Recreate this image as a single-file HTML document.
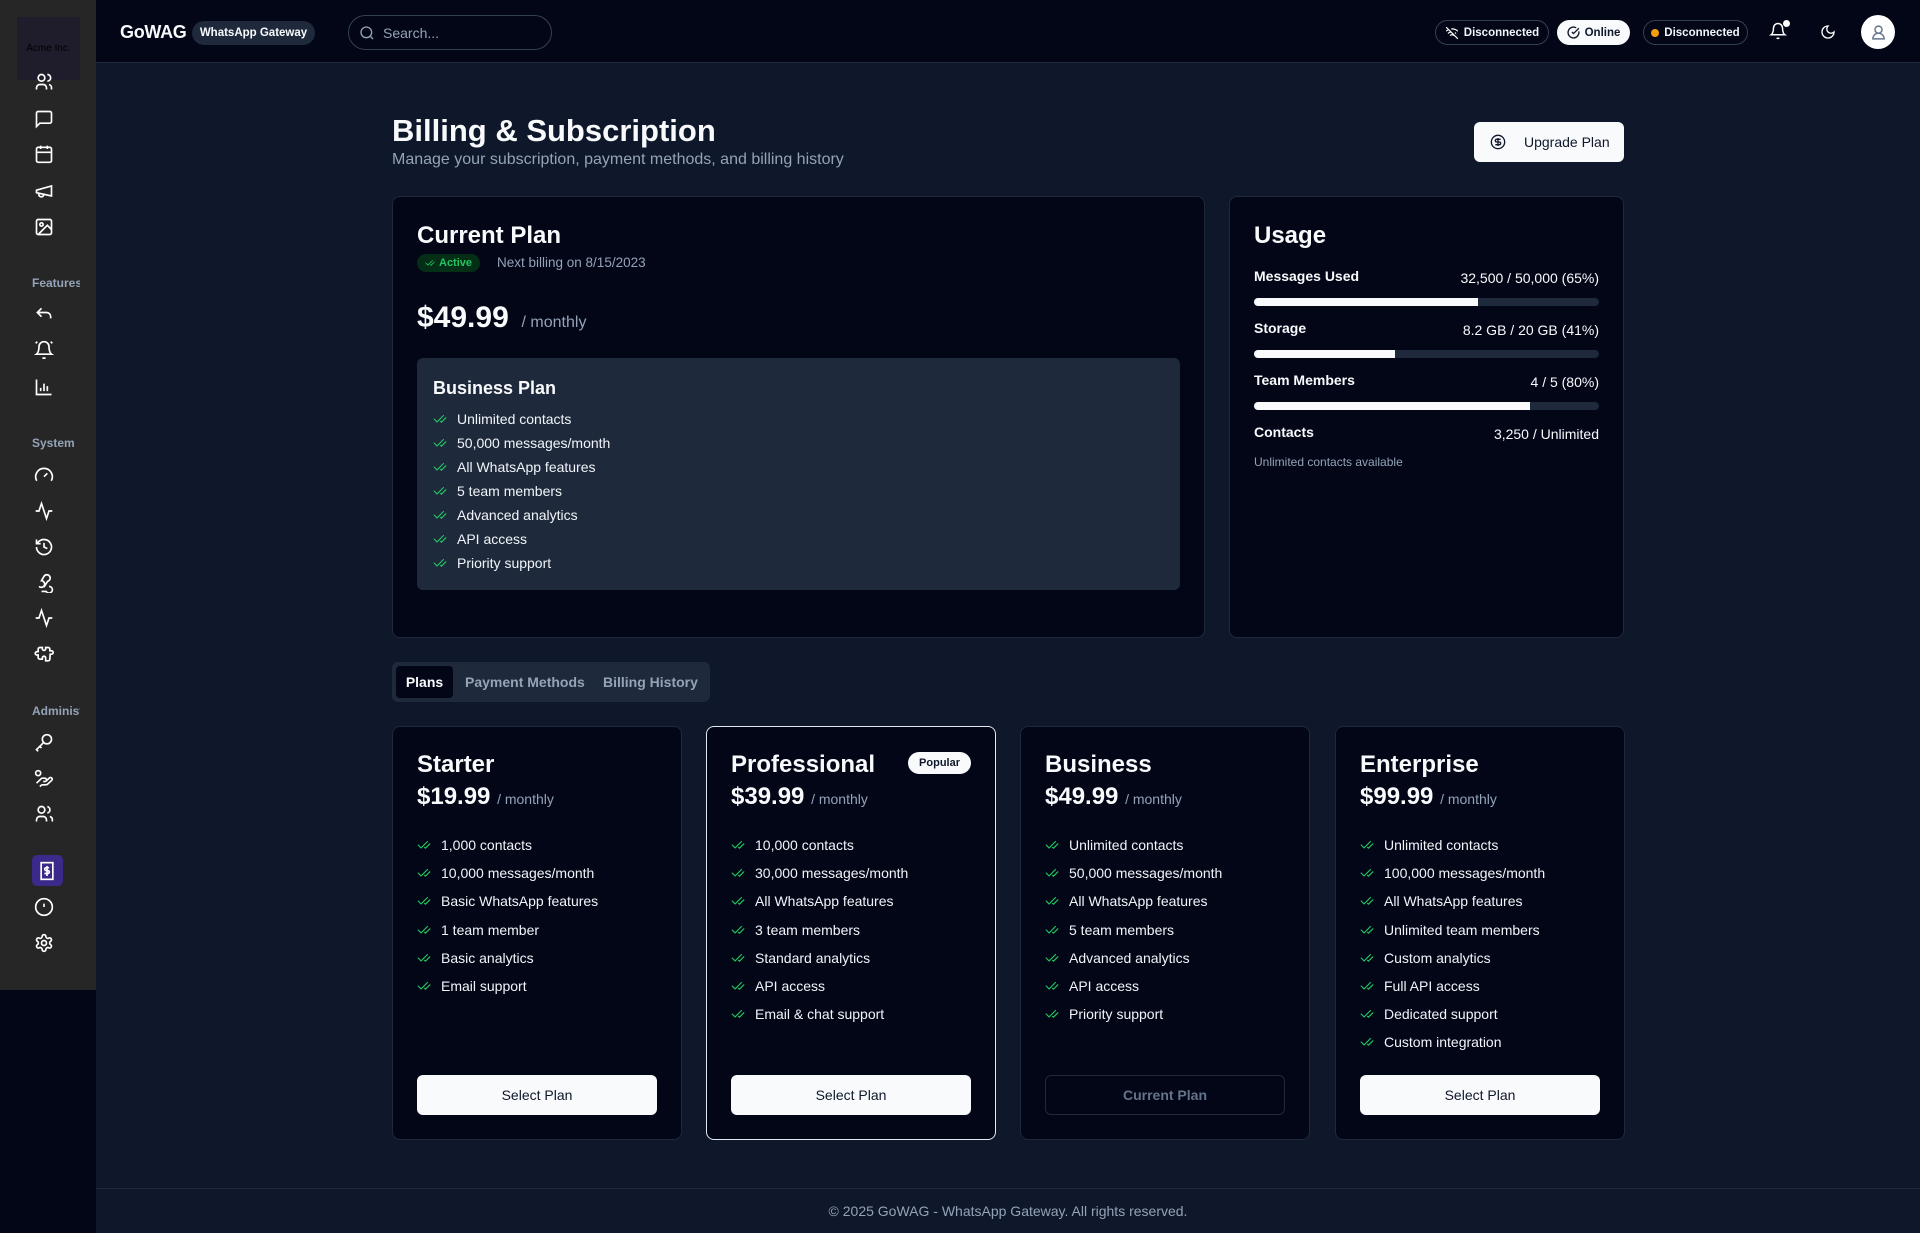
<!DOCTYPE html>
<html><head><meta charset="utf-8"><style>
*{box-sizing:border-box;margin:0;padding:0}
body{width:1920px;height:1233px;background:#0f172a;font-family:"Liberation Sans",sans-serif;color:#f8fafc;position:relative;overflow:hidden}
.abs{position:absolute}
svg{display:block;flex:none}
.side{left:0;top:0;width:96px;height:990px;background:#262626}
.sideb{left:0;top:990px;width:96px;height:243px;background:#020617}
.si{position:absolute;left:34px;width:20px;height:20px}
.sl{position:absolute;left:32px;font-size:12px;font-weight:bold;color:#94a3b8;white-space:nowrap;overflow:hidden;width:48px}
.hdr{left:96px;top:0;width:1824px;height:63px;background:#020617;border-bottom:1px solid #1e293b}
.pill{position:absolute;top:20px;height:25px;border-radius:13px;border:1px solid #334155;font-size:11.5px;font-weight:bold;display:flex;align-items:center;justify-content:center;gap:5px;padding:0 6px;color:#f1f5f9;white-space:nowrap}
.card{position:absolute;background:#020617;border:1px solid #1e293b;border-radius:8px}
.chk{display:flex;align-items:center;gap:10px;font-size:14px;color:#f1f5f9}
.ulab{position:absolute;left:24px;font-size:14px;font-weight:bold}
.uval{position:absolute;right:24px;font-size:14px}
.bar{position:absolute;left:24px;right:24px;height:8px;border-radius:4px;background:#1e293b;overflow:hidden}
.bar i{display:block;height:100%;background:#f8fafc}
.pc h3{position:absolute;left:24px;top:24px;font-size:24px;font-weight:bold}
.pc .pr{position:absolute;left:24px;top:56px;font-size:24px;font-weight:bold}
.pc .pr span{font-size:14px;font-weight:normal;color:#94a3b8}
.pc ul{position:absolute;left:24px;top:104px;list-style:none}
.pc li{height:28.2px}
.btn{position:absolute;left:24px;right:24px;bottom:24px;height:40px;border-radius:6px;background:#f8fafc;color:#0f172a;font-size:14px;display:flex;align-items:center;justify-content:center}
</style></head><body>
<svg width="0" height="0" style="position:absolute"><defs>
<symbol id="ck" viewBox="0 0 24 24"><path d="M18 6 7 17l-5-5M22 10l-7.5 7.5L13 16" fill="none" stroke="#22c55e" stroke-width="2" stroke-linecap="round" stroke-linejoin="round"/></symbol>
</defs></svg>

<div class="abs side"></div>
<div class="abs sideb"></div>
<div class="abs" style="left:17px;top:17px;width:63px;height:63px;background:#1f1c2c;display:flex;align-items:center;justify-content:center;font-size:10px;color:#000">Acme Inc.</div>

<svg class="si" style="top:72px" viewBox="0 0 24 24" fill="none" stroke="#fff" stroke-width="2"><circle cx="9" cy="7" r="4"/><path d="M3 21v-2a4 4 0 0 1 4-4h4a4 4 0 0 1 4 4v2M16 3a4 4 0 0 1 0 8M21 21v-2a4 4 0 0 0-3-4"/></svg>
<svg class="si" style="top:109px" viewBox="0 0 24 24" fill="none" stroke="#fff" stroke-width="2"><path d="M21 15a2 2 0 0 1-2 2H7l-4 4V5a2 2 0 0 1 2-2h14a2 2 0 0 1 2 2z"/></svg>
<svg class="si" style="top:144px" viewBox="0 0 24 24" fill="none" stroke="#fff" stroke-width="2"><rect x="3" y="4" width="18" height="18" rx="2"/><path d="M16 2v4M8 2v4M3 10h18"/></svg>
<svg class="si" style="top:181px" viewBox="0 0 24 24" fill="none" stroke="#fff" stroke-width="2"><path d="m3 11 18-5v12L3 14v-3zM11.6 16.8a3 3 0 1 1-5.8-1.6"/></svg>
<svg class="si" style="top:217px" viewBox="0 0 24 24" fill="none" stroke="#fff" stroke-width="2"><rect x="3" y="3" width="18" height="18" rx="2"/><circle cx="9" cy="9" r="2"/><path d="m21 15-5-5L5 21"/></svg>
<div class="sl" style="top:276px">Features</div>
<svg class="si" style="top:305px" viewBox="0 0 24 24" fill="none" stroke="#fff" stroke-width="2"><path d="M9 14 4 9l5-5M4 9h11a5 5 0 0 1 5 5v2"/></svg>
<svg class="si" style="top:340px" viewBox="0 0 24 24" fill="none" stroke="#fff" stroke-width="2"><path d="M10.3 21a2 2 0 0 0 3.4 0M6 8a6 6 0 0 1 12 0c0 7 3 9 3 9H3s3-2 3-9M4 2 2 4M20 2l2 2"/></svg>
<svg class="si" style="top:377px" viewBox="0 0 24 24" fill="none" stroke="#fff" stroke-width="2"><path d="M3 3v18h18M8 17v-4M12 17V8M16 17v-6"/></svg>
<div class="sl" style="top:436px">System</div>
<svg class="si" style="top:465px" viewBox="0 0 24 24" fill="none" stroke="#fff" stroke-width="2"><path d="m12 14 4-4M3.3 19a10 10 0 1 1 17.4 0"/></svg>
<svg class="si" style="top:501px" viewBox="0 0 24 24" fill="none" stroke="#fff" stroke-width="2"><path d="M22 12h-4l-3 9L9 3l-3 9H2"/></svg>
<svg class="si" style="top:537px" viewBox="0 0 24 24" fill="none" stroke="#fff" stroke-width="2"><path d="M3 12a9 9 0 1 0 3-6.7L3 8M3 3v5h5M12 7v5l4 2"/></svg>
<svg class="si" style="top:573px" viewBox="0 0 24 24" fill="none" stroke="#fff" stroke-width="2"><path d="M18 16.1a4 4 0 1 1-3.4 6H9M6 16.1a4 4 0 1 0 3-6.9L12 4M12 4a4 4 0 1 1 4.3 6l-4.3 7"/></svg>
<svg class="si" style="top:608px" viewBox="0 0 24 24" fill="none" stroke="#fff" stroke-width="2"><path d="M22 12h-4l-3 9L9 3l-3 9H2"/></svg>
<svg class="si" style="top:645px" viewBox="0 0 24 24" fill="none" stroke="#fff" stroke-width="2"><path d="M19.4 11H21a2 2 0 0 0 0-4h-2V5a2 2 0 0 0-2-2h-3v1.5a2 2 0 0 1-4 0V3H7a2 2 0 0 0-2 2v3H3.5a2 2 0 0 0 0 4H5v3a2 2 0 0 0 2 2h3v-1.5a2 2 0 0 1 4 0V19h3a2 2 0 0 0 2-2z"/></svg>
<div class="sl" style="top:704px">Administration</div>
<svg class="si" style="top:733px" viewBox="0 0 24 24" fill="none" stroke="#fff" stroke-width="2"><circle cx="15.5" cy="7.5" r="5.5"/><path d="M11.5 11.5 3 20l2 2M7 16l2 2"/></svg>
<svg class="si" style="top:769px" viewBox="0 0 24 24" fill="none" stroke="#fff" stroke-width="2"><circle cx="5" cy="5" r="3"/><path d="M11 15h2a2 2 0 1 0 0-4h-3c-.6 0-1.1.2-1.4.6L3 17M7 21l1.6-1.4c.3-.4.8-.6 1.4-.6h4c1.1 0 2.1-.4 2.8-1.2l4.6-4.4a2 2 0 0 0-2.8-2.8l-4.2 3.9"/></svg>
<svg class="si" style="top:804px" viewBox="0 0 24 24" fill="none" stroke="#fff" stroke-width="2"><circle cx="9" cy="7" r="4"/><path d="M3 21v-2a4 4 0 0 1 4-4h4a4 4 0 0 1 4 4v2M16 3.1a4 4 0 0 1 0 7.8M22 21v-2a4 4 0 0 0-3-3.9"/></svg>
<div class="abs" style="left:32px;top:855px;width:31px;height:31px;background:#3b2a8a;border-radius:5px"></div>
<svg class="si" style="top:861px;left:37px" viewBox="0 0 24 24" fill="none" stroke="#fff" stroke-width="2"><rect x="5" y="2" width="14" height="20"/><path d="M14.5 8h-3.5a1.5 1.5 0 0 0 0 3.5h2a1.5 1.5 0 0 1 0 3.5H9M12 6v12"/></svg>
<svg class="si" style="top:897px" viewBox="0 0 24 24" fill="none" stroke="#fff" stroke-width="2"><circle cx="12" cy="12" r="10"/><path d="M12 8v4M12 16h.01"/></svg>
<svg class="si" style="top:933px" viewBox="0 0 24 24" fill="none" stroke="#fff" stroke-width="2"><circle cx="12" cy="12" r="3"/><path d="M12.2 2h-.4a2 2 0 0 0-2 2v.2a2 2 0 0 1-1 1.7l-.4.3a2 2 0 0 1-2 0l-.2-.1a2 2 0 0 0-2.7.7l-.2.4a2 2 0 0 0 .7 2.7l.2.1a2 2 0 0 1 1 1.7v.5a2 2 0 0 1-1 1.7l-.2.1a2 2 0 0 0-.7 2.7l.2.4a2 2 0 0 0 2.7.7l.2-.1a2 2 0 0 1 2 0l.4.3a2 2 0 0 1 1 1.7v.2a2 2 0 0 0 2 2h.4a2 2 0 0 0 2-2v-.2a2 2 0 0 1 1-1.7l.4-.3a2 2 0 0 1 2 0l.2.1a2 2 0 0 0 2.7-.7l.2-.4a2 2 0 0 0-.7-2.7l-.2-.1a2 2 0 0 1-1-1.7v-.5a2 2 0 0 1 1-1.7l.2-.1a2 2 0 0 0 .7-2.7l-.2-.4a2 2 0 0 0-2.7-.7l-.2.1a2 2 0 0 1-2 0l-.4-.3a2 2 0 0 1-1-1.7V4a2 2 0 0 0-2-2z"/></svg>

<div class="abs hdr"></div>
<div class="abs" style="left:120px;top:22px;font-size:18px;font-weight:bold;letter-spacing:-0.3px">GoWAG</div>
<div class="abs" style="left:192px;top:21px;width:123px;height:24px;border-radius:12px;background:#1e293b;font-size:11.5px;font-weight:bold;display:flex;align-items:center;justify-content:center;white-space:nowrap">WhatsApp Gateway</div>
<div class="abs" style="left:348px;top:15px;width:204px;height:35px;border:1px solid #334155;border-radius:18px;display:flex;align-items:center;padding-left:10px;gap:8px;font-size:14px;color:#94a3b8">
<svg width="16" height="16" viewBox="0 0 24 24" fill="none" stroke="#94a3b8" stroke-width="2"><circle cx="11" cy="11" r="8"/><path d="m21 21-4.3-4.3"/></svg>Search...</div>
<div class="pill" style="left:1435px;width:114px"><svg width="14" height="14" viewBox="0 0 24 24" fill="none" stroke="#fff" stroke-width="2"><path d="M12 20h.01M8.5 16.4a5 5 0 0 1 7 0M5 12.9a10 10 0 0 1 5.2-2.8M19 12.9a10 10 0 0 0-2-1.5M2 8.8a15 15 0 0 1 4.2-2.6M22 8.8A15 15 0 0 0 10.7 5M2 2l20 20"/></svg>Disconnected</div>
<div class="pill" style="left:1557px;width:73px;background:#f8fafc;color:#0f172a;border-color:#f8fafc"><svg width="13" height="13" viewBox="0 0 24 24" fill="none" stroke="#0f172a" stroke-width="2.5"><path d="M21.8 10A10 10 0 1 1 17 3.3M9 11l3 3L22 4"/></svg>Online</div>
<div class="pill" style="left:1643px;width:105px"><span style="flex:none;width:8px;height:8px;border-radius:50%;background:#f59e0b;display:inline-block"></span>Disconnected</div>
<svg class="abs" style="left:1769px;top:22px" width="18" height="18" viewBox="0 0 24 24" fill="none" stroke="#fff" stroke-width="2"><path d="M10.3 21a2 2 0 0 0 3.4 0M6 8a6 6 0 0 1 12 0c0 7 3 9 3 9H3s3-2 3-9"/></svg>
<div class="abs" style="left:1783px;top:20px;width:7px;height:7px;border-radius:50%;background:#fff"></div>
<svg class="abs" style="left:1820px;top:24px" width="16" height="16" viewBox="0 0 24 24" fill="none" stroke="#fff" stroke-width="2"><path d="M12 3a6 6 0 0 0 9 9 9 9 0 1 1-9-9z"/></svg>
<div class="abs" style="left:1861px;top:15px;width:34px;height:34px;border-radius:50%;background:#fff;display:flex;align-items:center;justify-content:center"><svg width="17" height="17" viewBox="0 0 24 24" fill="none" stroke="#64748b" stroke-width="2"><circle cx="12" cy="8" r="5"/><path d="M20 21a8 8 0 0 0-16 0z"/></svg></div>

<div class="abs" style="left:392px;top:113px;font-size:31px;font-weight:bold">Billing &amp; Subscription</div>
<div class="abs" style="left:392px;top:151px;font-size:16px;color:#94a3b8">Manage your subscription, payment methods, and billing history</div>
<div class="abs" style="left:1474px;top:122px;width:150px;height:40px;background:#f8fafc;border-radius:6px;color:#0f172a;font-size:14px;display:flex;align-items:center;gap:18px;padding-left:16px"><svg width="16" height="16" viewBox="0 0 24 24" fill="none" stroke="#0f172a" stroke-width="2"><circle cx="12" cy="12" r="10"/><path d="M16 8h-6a2 2 0 1 0 0 4h4a2 2 0 1 1 0 4H8M12 18V6"/></svg>Upgrade Plan</div>

<div class="card" style="left:392px;top:196px;width:813px;height:442px">
 <div class="abs" style="left:24px;top:25px;font-size:24px;font-weight:bold">Current Plan</div>
 <div class="abs" style="left:24px;top:57px;height:18px;padding:0 8px;border-radius:9px;background:#052e16;color:#22c55e;font-size:11px;font-weight:bold;display:flex;align-items:center;gap:4px"><svg width="10" height="10"><use href="#ck"/></svg>Active</div>
 <div class="abs" style="left:104px;top:58px;font-size:13.5px;color:#94a3b8">Next billing on 8/15/2023</div>
 <div class="abs" style="left:24px;top:104px;font-size:30px;font-weight:bold">$49.99 <span style="font-size:16px;font-weight:normal;color:#94a3b8">&nbsp;/ monthly</span></div>
 <div class="abs" style="left:24px;top:161px;width:763px;height:232px;background:#1e293b;border-radius:6px">
  <div class="abs" style="left:16px;top:20px;font-size:18px;font-weight:bold">Business Plan</div>
  <div class="abs" style="left:16px;top:49px">
   <div class="chk" style="height:24px"><svg width="14" height="14"><use href="#ck"/></svg>Unlimited contacts</div>
   <div class="chk" style="height:24px"><svg width="14" height="14"><use href="#ck"/></svg>50,000 messages/month</div>
   <div class="chk" style="height:24px"><svg width="14" height="14"><use href="#ck"/></svg>All WhatsApp features</div>
   <div class="chk" style="height:24px"><svg width="14" height="14"><use href="#ck"/></svg>5 team members</div>
   <div class="chk" style="height:24px"><svg width="14" height="14"><use href="#ck"/></svg>Advanced analytics</div>
   <div class="chk" style="height:24px"><svg width="14" height="14"><use href="#ck"/></svg>API access</div>
   <div class="chk" style="height:24px"><svg width="14" height="14"><use href="#ck"/></svg>Priority support</div>
  </div>
 </div>
</div>

<div class="card" style="left:1229px;top:196px;width:395px;height:442px">
 <div class="abs" style="left:24px;top:25px;font-size:24px;font-weight:bold">Usage</div>
 <div class="ulab" style="top:71px">Messages Used</div><div class="uval" style="top:73px">32,500 / 50,000 (65%)</div>
 <div class="bar" style="top:101px"><i style="width:65%"></i></div>
 <div class="ulab" style="top:123px">Storage</div><div class="uval" style="top:125px">8.2 GB / 20 GB (41%)</div>
 <div class="bar" style="top:153px"><i style="width:41%"></i></div>
 <div class="ulab" style="top:175px">Team Members</div><div class="uval" style="top:177px">4 / 5 (80%)</div>
 <div class="bar" style="top:205px"><i style="width:80%"></i></div>
 <div class="ulab" style="top:227px">Contacts</div><div class="uval" style="top:229px">3,250 / Unlimited</div>
 <div class="abs" style="left:24px;top:258px;font-size:12px;color:#94a3b8">Unlimited contacts available</div>
</div>

<div class="abs" style="left:392px;top:662px;width:318px;height:40px;background:#1e293b;border-radius:6px"></div>
<div class="abs" style="left:396px;top:666px;width:57px;height:32px;background:#020617;border-radius:4px;font-size:14px;font-weight:bold;display:flex;align-items:center;justify-content:center">Plans</div>
<div class="abs" style="left:465px;top:674px;font-size:14px;font-weight:bold;color:#94a3b8">Payment Methods</div>
<div class="abs" style="left:603px;top:674px;font-size:14px;font-weight:bold;color:#94a3b8">Billing History</div>

<div class="card pc" style="left:392px;top:726px;width:290px;height:414px">
 <h3>Starter</h3><div class="pr">$19.99 <span>/ monthly</span></div>
 <ul><li class="chk"><svg width="14" height="14"><use href="#ck"/></svg>1,000 contacts</li><li class="chk"><svg width="14" height="14"><use href="#ck"/></svg>10,000 messages/month</li><li class="chk"><svg width="14" height="14"><use href="#ck"/></svg>Basic WhatsApp features</li><li class="chk"><svg width="14" height="14"><use href="#ck"/></svg>1 team member</li><li class="chk"><svg width="14" height="14"><use href="#ck"/></svg>Basic analytics</li><li class="chk"><svg width="14" height="14"><use href="#ck"/></svg>Email support</li></ul>
 <div class="btn">Select Plan</div>
</div>
<div class="card pc" style="left:706px;top:726px;width:290px;height:414px;border-color:#e2e8f0">
 <h3>Professional</h3><div class="pr">$39.99 <span>/ monthly</span></div>
 <div class="abs" style="right:24px;top:25px;height:22px;padding:0 11px;border-radius:11px;background:#f8fafc;color:#0f172a;font-size:11px;font-weight:bold;display:flex;align-items:center">Popular</div>
 <ul><li class="chk"><svg width="14" height="14"><use href="#ck"/></svg>10,000 contacts</li><li class="chk"><svg width="14" height="14"><use href="#ck"/></svg>30,000 messages/month</li><li class="chk"><svg width="14" height="14"><use href="#ck"/></svg>All WhatsApp features</li><li class="chk"><svg width="14" height="14"><use href="#ck"/></svg>3 team members</li><li class="chk"><svg width="14" height="14"><use href="#ck"/></svg>Standard analytics</li><li class="chk"><svg width="14" height="14"><use href="#ck"/></svg>API access</li><li class="chk"><svg width="14" height="14"><use href="#ck"/></svg>Email &amp; chat support</li></ul>
 <div class="btn">Select Plan</div>
</div>
<div class="card pc" style="left:1020px;top:726px;width:290px;height:414px">
 <h3>Business</h3><div class="pr">$49.99 <span>/ monthly</span></div>
 <ul><li class="chk"><svg width="14" height="14"><use href="#ck"/></svg>Unlimited contacts</li><li class="chk"><svg width="14" height="14"><use href="#ck"/></svg>50,000 messages/month</li><li class="chk"><svg width="14" height="14"><use href="#ck"/></svg>All WhatsApp features</li><li class="chk"><svg width="14" height="14"><use href="#ck"/></svg>5 team members</li><li class="chk"><svg width="14" height="14"><use href="#ck"/></svg>Advanced analytics</li><li class="chk"><svg width="14" height="14"><use href="#ck"/></svg>API access</li><li class="chk"><svg width="14" height="14"><use href="#ck"/></svg>Priority support</li></ul>
 <div class="btn" style="background:#020617;border:1px solid #1e293b;color:#64748b;font-weight:bold">Current Plan</div>
</div>
<div class="card pc" style="left:1335px;top:726px;width:290px;height:414px">
 <h3>Enterprise</h3><div class="pr">$99.99 <span>/ monthly</span></div>
 <ul><li class="chk"><svg width="14" height="14"><use href="#ck"/></svg>Unlimited contacts</li><li class="chk"><svg width="14" height="14"><use href="#ck"/></svg>100,000 messages/month</li><li class="chk"><svg width="14" height="14"><use href="#ck"/></svg>All WhatsApp features</li><li class="chk"><svg width="14" height="14"><use href="#ck"/></svg>Unlimited team members</li><li class="chk"><svg width="14" height="14"><use href="#ck"/></svg>Custom analytics</li><li class="chk"><svg width="14" height="14"><use href="#ck"/></svg>Full API access</li><li class="chk"><svg width="14" height="14"><use href="#ck"/></svg>Dedicated support</li><li class="chk"><svg width="14" height="14"><use href="#ck"/></svg>Custom integration</li></ul>
 <div class="btn">Select Plan</div>
</div>

<div class="abs" style="left:96px;top:1188px;width:1824px;height:1px;background:#1e293b"></div>
<div class="abs" style="left:96px;top:1203px;width:1824px;text-align:center;font-size:14px;color:#94a3b8">© 2025 GoWAG - WhatsApp Gateway. All rights reserved.</div>
</body></html>
